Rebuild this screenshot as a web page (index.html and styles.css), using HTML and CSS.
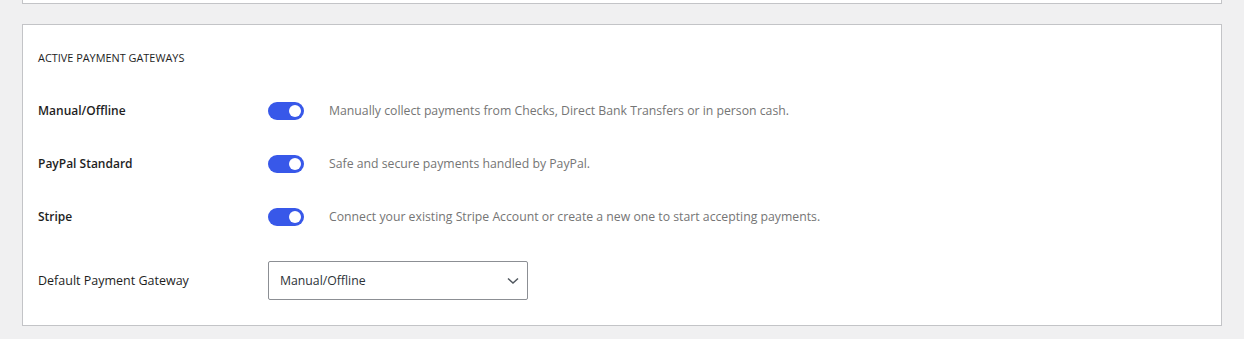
FILE: index.html
```html
<!DOCTYPE html>
<html lang="en">
<head>
<meta charset="utf-8">
<title>Payment Gateways</title>
<link rel="stylesheet" href="styles.css">
</head>
<body>
<div class="card-top"></div>
<section class="card">
  <h2 class="section-title">ACTIVE PAYMENT GATEWAYS</h2>
  <div class="row">
    <div class="label">Manual/Offline</div>
    <span class="toggle"><span class="knob"></span></span>
    <div class="desc">Manually collect payments from Checks, Direct Bank Transfers or in person cash.</div>
  </div>
  <div class="row">
    <div class="label">PayPal Standard</div>
    <span class="toggle"><span class="knob"></span></span>
    <div class="desc">Safe and secure payments handled by PayPal.</div>
  </div>
  <div class="row">
    <div class="label">Stripe</div>
    <span class="toggle"><span class="knob"></span></span>
    <div class="desc">Connect your existing Stripe Account or create a new one to start accepting payments.</div>
  </div>
  <div class="row row-select">
    <div class="label label-normal">Default Payment Gateway</div>
    <div class="select">
      <span class="select-value">Manual/Offline</span>
      <svg class="chevron" width="12" height="8" viewBox="0 0 12 8" aria-hidden="true"><path d="M1 1.5 L6 6 L11 1.5" fill="none" stroke="#50575e" stroke-width="1.5"/></svg>
    </div>
  </div>
</section>
</body>
</html>
```

FILE: styles.css
```css
* { box-sizing: border-box; }
body {
  margin: 0;
  background: #f0f0f1;
  font-family: "Open Sans", "Noto Sans", sans-serif;
  font-size: 12.25px;
  color: #1e1e1e;
}
.card-top {
  margin: 0 22px;
  width: 1200px;
  height: 4px;
  background: #fff;
  border: 1px solid #c3c4c7;
  border-top: none;
}
.card {
  margin: 20px 22px 0;
  width: 1200px;
  background: #fff;
  border: 1px solid #c3c4c7;
  padding: 25px 15px 25px;
}
.section-title {
  margin: 0 0 18px;
  font-size: 10.9px;
  font-weight: 400;
  line-height: 16px;
  color: #1e1e1e;
}
.row {
  display: flex;
  align-items: center;
  height: 53px;
}
.row-select {
  height: 39px;
  margin-top: 18px;
}
.label {
  width: 230px;
  font-weight: 600;
  font-size: 12px;
  color: #1e1e1e;
}
.label-normal {
  font-weight: 500;
  font-size: 12.5px;
}
.toggle {
  position: relative;
  width: 36px;
  height: 18px;
  border-radius: 9px;
  background: #3858e9;
  flex: none;
}
.knob {
  position: absolute;
  right: 3px;
  top: 3px;
  width: 12px;
  height: 12px;
  border-radius: 50%;
  background: #fff;
}
.desc {
  margin-left: 25px;
  color: #757575;
}
.select {
  display: flex;
  align-items: center;
  justify-content: space-between;
  width: 260px;
  height: 39px;
  border: 1px solid #8c8f94;
  border-radius: 2px;
  padding: 0 8px 0 11px;
  color: #2c3338;
}
```
